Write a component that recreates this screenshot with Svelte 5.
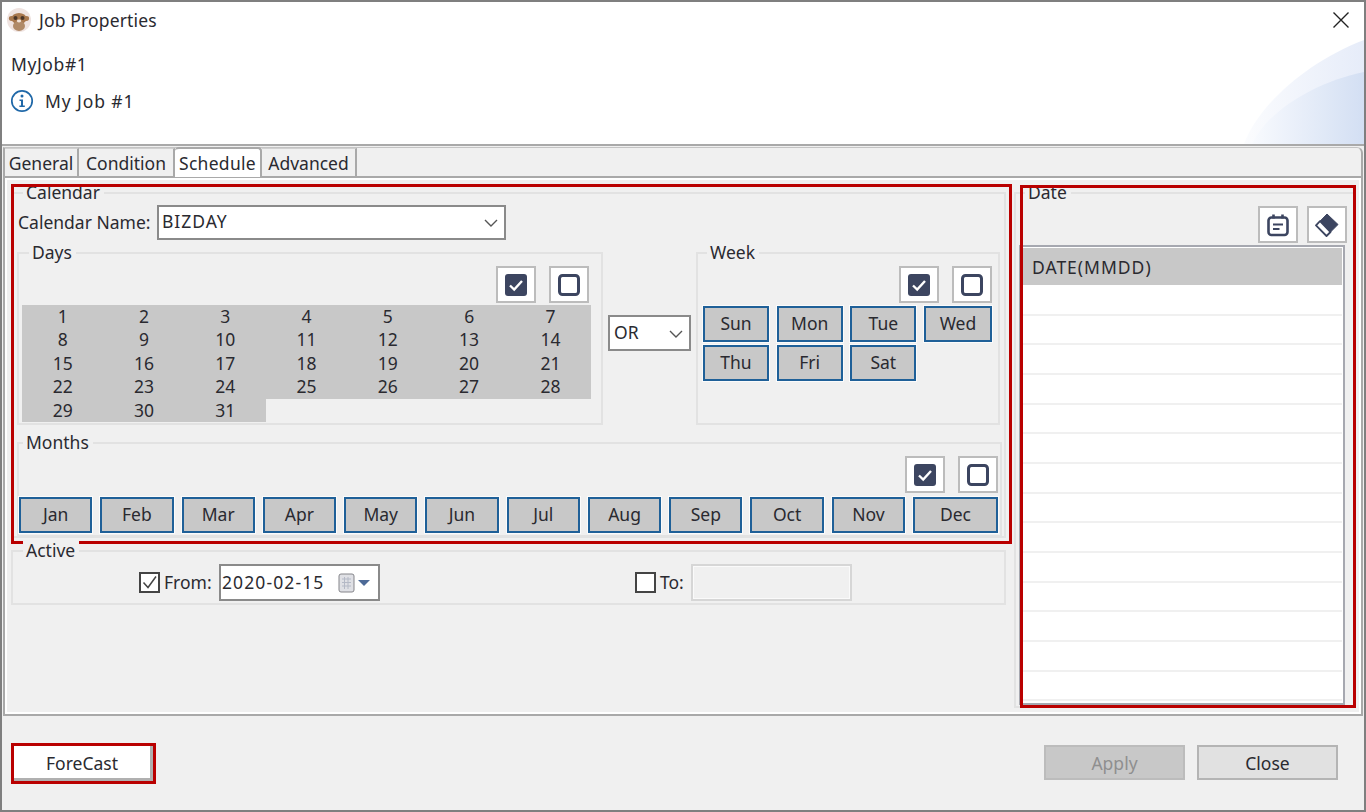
<script>
	const tabs = [
		{ label: 'General', width: 74 },
		{ label: 'Condition', width: 96 },
		{ label: 'Schedule', width: 87 },
		{ label: 'Advanced', width: 95 }
	];
	const days = Array.from({ length: 31 }, (_, i) => i + 1);
	const weekDays = ['Sun', 'Mon', 'Tue', 'Wed', 'Thu', 'Fri', 'Sat'];
	const months = ['Jan', 'Feb', 'Mar', 'Apr', 'May', 'Jun', 'Jul', 'Aug', 'Sep', 'Oct', 'Nov', 'Dec'];
	const emptyRows = Array.from({ length: 14 });
</script>

{#snippet checkPair()}
	<div class="check-pair">
		<button class="icon-btn" aria-label="Select all">
			<svg width="22" height="22" viewBox="0 0 22 22">
				<rect x="0" y="0" width="22" height="22" rx="3" fill="#3c4560" />
				<path d="M5 11.5l4.2 4L17 7" fill="none" stroke="#fff" stroke-width="2.4" />
			</svg>
		</button>
		<button class="icon-btn" aria-label="Clear all">
			<svg width="22" height="22" viewBox="0 0 22 22">
				<rect x="1.5" y="1.5" width="19" height="19" rx="3" fill="#fff" stroke="#3c4560" stroke-width="3" />
			</svg>
		</button>
	</div>
{/snippet}

{#snippet chevron()}
	<svg class="chevron" width="14" height="8" viewBox="0 0 14 8">
		<path d="M1 1l6 6 6-6" fill="none" stroke="#555" stroke-width="1.4" />
	</svg>
{/snippet}

<div class="window">
	<header class="header">
		<svg class="swoosh" width="120" height="106" viewBox="0 0 120 106">
			<defs>
				<linearGradient id="sw" x1="0" x2="1" y1="0" y2="0">
					<stop offset="0" stop-color="#fbfcfe" />
					<stop offset="1" stop-color="#e6ecf9" />
				</linearGradient>
				<linearGradient id="sw2" x1="0" x2="1" y1="0" y2="0">
					<stop offset="0" stop-color="#f8fafe" />
					<stop offset="1" stop-color="#d3dff3" />
				</linearGradient>
			</defs>
			<path d="M0 106C14 68 62 24 120 2V106Z" fill="url(#sw)" />
			<path d="M8 106C24 72 72 44 120 34V106Z" fill="url(#sw2)" />
		</svg>
		<div class="title-row">
			<svg class="logo" width="24" height="24" viewBox="0 0 24 24">
				<circle cx="12" cy="12" r="12" fill="#efe3e0" />
				<ellipse cx="4.5" cy="10.5" rx="2.6" ry="2.4" fill="#a9794f" />
				<ellipse cx="19.5" cy="10.5" rx="2.6" ry="2.4" fill="#a9794f" />
				<ellipse cx="12" cy="10.5" rx="7.5" ry="5.5" fill="#a9794f" />
				<ellipse cx="12" cy="18" rx="6" ry="5" fill="#b08a68" />
				<circle cx="8.5" cy="10" r="2" fill="#4a3527" />
				<circle cx="15.5" cy="10" r="2" fill="#4a3527" />
				<ellipse cx="12" cy="13" rx="2.2" ry="1.4" fill="#f0e2d8" />
			</svg>
			<span class="title">Job Properties</span>
			<svg class="close" width="16" height="16" viewBox="0 0 16 16">
				<path d="M0.5 0.5l15 15M15.5 0.5l-15 15" stroke="#222" stroke-width="1.4" />
			</svg>
		</div>
		<div class="job-name">MyJob#1</div>
		<div class="job-desc">
			<svg width="24" height="24" viewBox="0 0 24 24">
				<circle cx="12" cy="12" r="10.2" fill="#fff" stroke="#1f68a8" stroke-width="1.7" />
				<circle cx="12" cy="7" r="1.5" fill="#1f68a8" />
				<path d="M9.5 10.5H13V16.6H14.8V18H9.4V16.6H11V11.9H9.5Z" fill="#1f68a8" />
			</svg>
			<span>My Job #1</span>
		</div>
	</header>

	<section class="folder">
		<nav class="tabs">
			{#each tabs as tab}
				<div class="tab" class:active={tab.label === 'Schedule'} style="width: {tab.width}px">{tab.label}</div>
			{/each}
		</nav>

		<div class="content">
			<div class="left">
				<div class="group calendar">
					<span class="legend">Calendar</span>
					<div class="name-row">
						<span class="name-label">Calendar Name:</span>
						<div class="combo name-combo"><span class="wide">BIZDAY</span> {@render chevron()}</div>
					</div>

					<div class="days-row">
						<div class="group days">
							<span class="legend">Days</span>
							{@render checkPair()}
							<div class="day-grid">
								{#each days as d}
									<div class="day">{d}</div>
								{/each}
							</div>
						</div>
						<div class="combo or-combo">OR {@render chevron()}</div>
						<div class="group week">
							<span class="legend week-legend">Week</span>
							{@render checkPair()}
							<div class="week-grid">
								{#each weekDays as w}
									<button class="toggle">{w}</button>
								{/each}
							</div>
						</div>
					</div>

					<div class="group months">
						<span class="legend months-legend">Months</span>
						{@render checkPair()}
						<div class="month-grid">
							{#each months as m}
								<button class="toggle">{m}</button>
							{/each}
						</div>
					</div>
					<div class="mark mark-calendar"></div>
				</div>

				<div class="group active-group">
					<span class="legend">Active</span>
					<span class="box checked">
						<svg width="17" height="17" viewBox="0 0 17 17">
							<path d="M2.5 8.5l4.5 5 8-11" fill="none" stroke="#444" stroke-width="1.5" />
						</svg>
					</span>
					<span class="from-label">From:</span>
					<div class="combo date-combo">
						<span class="wide date-text">2020-02-15</span>
						<svg width="34" height="24" viewBox="0 0 34 24">
							<rect x="2" y="3" width="15" height="18" rx="2" fill="#dfe0e5" stroke="#85858a" />
							<path d="M5 8h9M5 11.5h9M5 15h9M7.5 6v12M11 6v12" stroke="#b4b9c6" stroke-width="1" />
							<path d="M21 9h12l-6 6z" fill="#4d6a97" />
						</svg>
					</div>
					<span class="box to-box"></span>
					<span class="to-label">To:</span>
					<div class="to-input"></div>
				</div>
			</div>

			<div class="group date-group">
				<span class="legend date-legend">Date</span>
				<div class="date-tools">
					<button class="icon-btn" aria-label="Calendar">
						<svg width="24" height="24" viewBox="0 0 24 24">
							<rect x="2.5" y="4.5" width="19" height="17.5" rx="3" fill="#fff" stroke="#3c4560" stroke-width="2.6" />
							<path d="M7.5 1.5v4M16.5 1.5v4" stroke="#3c4560" stroke-width="2.6" />
							<path d="M7 11.5h10M7 16h6.5" stroke="#3c4560" stroke-width="2" />
						</svg>
					</button>
					<button class="icon-btn" aria-label="Erase">
						<svg width="24" height="24" viewBox="0 0 24 24">
							<path d="M12 1L23 11.5 15.5 19 5 8.2Z" fill="#3c4560" stroke="#3c4560" stroke-linejoin="round" />
							<path d="M5 8.2L15.5 19 11.5 23 1 12.4Z" fill="#fff" stroke="#3c4560" stroke-width="1.8" stroke-linejoin="round" />
						</svg>
					</button>
				</div>
				<div class="date-list">
					<div class="date-row selected"><span class="wide">DATE(MMDD)</span></div>
					{#each emptyRows as _}
						<div class="date-row"></div>
					{/each}
				</div>
				<div class="mark mark-date"></div>
			</div>
		</div>
	</section>

	<footer class="footer">
		<div class="forecast-wrap">
			<button class="forecast">ForeCast</button>
			<div class="mark mark-forecast"></div>
		</div>
		<div class="actions">
			<button class="action disabled">Apply</button>
			<button class="action">Close</button>
		</div>
	</footer>
</div>

<style>
	:global(body) {
		margin: 0;
		background: #f0f0f0;
	}
	* {
		box-sizing: border-box;
	}
	.window {
		width: 1366px;
		height: 812px;
		border: 2px solid #7f7f7f;
		background: #f0f0f0;
		display: flex;
		flex-direction: column;
		font-family: "Noto Sans", "Open Sans", sans-serif;
		font-size: 17.5px;
		line-height: 24px;
		color: #2a2a30;
		overflow: hidden;
	}
	button {
		font: inherit;
		color: inherit;
		padding: 0;
	}
	.wide {
		letter-spacing: 1px;
	}

	/* header */
	.header {
		position: relative;
		height: 144px;
		flex: none;
		background: #fff;
		border-bottom: 2px solid #a9a9a9;
		overflow: hidden;
	}
	.swoosh {
		position: absolute;
		right: 0;
		bottom: 0;
	}
	.title-row {
		display: flex;
		align-items: center;
		height: 24px;
		margin: 6px 0 0 5px;
		gap: 8px;
	}
	.title {
		letter-spacing: 0.15px;
		margin-top: -1px;
	}
	.close {
		position: absolute;
		right: 15px;
		top: 10px;
	}
	.job-name {
		margin: 20px 0 0 9px;
		letter-spacing: 0.6px;
	}
	.job-desc {
		display: flex;
		align-items: center;
		gap: 11px;
		margin: 13px 0 0 8px;
		letter-spacing: 0.9px;
	}

	/* tabs */
	.folder {
		flex: none;
		height: 569px;
		margin: 1px 1px 0 1px;
		border: 2px solid #a9a9a9;
		border-top: 1px solid #c4c4c4;
		border-top-right-radius: 6px;
		display: flex;
		flex-direction: column;
	}
	.tabs {
		flex: none;
		height: 30px;
		display: flex;
		border-bottom: 2px solid #a9a9a9;
	}
	.tab {
		height: 28px;
		padding-top: 2px;
		text-align: center;
		border-right: 2px solid #a9a9a9;
		border-top: 1px solid #d0d0d0;
		white-space: nowrap;
	}
	.tab.active {
		height: 30px;
		margin-top: -1px;
		background: #fff;
		border-top: 2px solid #a9a9a9;
		border-top-left-radius: 4px;
		border-top-right-radius: 4px;
		letter-spacing: 0.3px;
	}
	.content {
		flex: 1;
		display: flex;
		gap: 8px;
		border: 2px solid #fff;
		padding: 12px 3px 4px 4px;
		min-height: 0;
	}
	.left {
		width: 995px;
		flex: none;
	}

	/* group boxes */
	.group {
		position: relative;
		border: 2px solid #e2e2e2;
	}
	.legend {
		position: absolute;
		top: -14px;
		left: 10px;
		padding: 0 4px 0 3px;
		background: #f0f0f0;
		line-height: 24px;
	}
	.week-legend {
		left: 9px;
	}
	.months-legend {
		left: 4px;
	}
	.date-legend {
		left: 9px;
	}
	.mark {
		position: absolute;
		border: 3px solid #b90000;
		pointer-events: none;
	}
	.mark-calendar {
		inset: -10px -8px -8px -2px;
	}
	.mark-date {
		inset: -9px -2px -2px 4px;
	}
	.mark-forecast {
		inset: -3px;
	}

	/* calendar */
	.calendar {
		height: 346px;
		padding: 11px 0 0 4px;
	}
	.name-row {
		display: flex;
		align-items: center;
		padding-left: 1px;
	}
	.name-label {
		width: 139px;
		flex: none;
		white-space: nowrap;
		margin-top: -1px;
	}
	.combo {
		display: flex;
		align-items: center;
		justify-content: space-between;
		background: #fff;
		border: 2px solid #8a8a8a;
	}
	.name-combo {
		width: 349px;
		height: 35px;
		padding: 0 6px 4px 3px;
	}
	.chevron {
		flex: none;
		margin-top: 4px;
	}
	.days-row {
		display: flex;
		align-items: flex-start;
		margin-top: 12px;
	}
	.days {
		width: 586px;
		height: 173px;
		padding: 12px 12px 0 3px;
	}
	.check-pair {
		display: flex;
		justify-content: flex-end;
		gap: 13px;
	}
	.icon-btn {
		width: 40px;
		height: 37px;
		display: flex;
		align-items: center;
		justify-content: center;
		background: #fff;
		border: 2px solid #bcbcbc;
	}
	.day-grid {
		display: grid;
		grid-template-columns: repeat(7, 81.3px);
		grid-auto-rows: 23.4px;
		margin-top: 2px;
		width: 569px;
	}
	.day {
		background: #c8c8c8;
		text-align: center;
		line-height: 23px;
	}
	.or-combo {
		flex: none;
		width: 83px;
		height: 36px;
		margin: 63px 5px 0 5px;
		padding: 0 6px 3px 4px;
	}
	.week {
		width: 304px;
		height: 173px;
		padding: 12px 6px 0 5px;
	}
	.week-grid {
		display: grid;
		grid-template-columns: 66px 66px 66px 68px;
		grid-auto-rows: 36px;
		column-gap: 7.67px;
		row-gap: 3px;
		margin-top: 3px;
	}
	.toggle {
		background: #c8c8c8;
		border: 2px solid #1f6098;
		outline: 1px solid #fbfbfb;
		line-height: 30px;
		padding-bottom: 2px;
	}
	.months {
		width: 985px;
		height: 95px;
		margin-top: 17px;
		padding: 12px 2px 0 0;
	}
	.month-grid {
		display: grid;
		grid-template-columns: repeat(11, 1fr) 85px;
		grid-auto-rows: 36px;
		gap: 8px;
		margin-top: 4px;
	}

	/* active */
	.active-group {
		height: 55px;
		margin-top: 12px;
		display: flex;
		align-items: center;
		padding: 10px 0 0 126px;
	}
	.box {
		flex: none;
		width: 21px;
		height: 21px;
		display: flex;
		align-items: center;
		justify-content: center;
		background: #fff;
		border: 2px solid #444;
	}
	.from-label {
		width: 48px;
		margin: -2px 0 0 4px;
		flex: none;
	}
	.date-combo {
		width: 161px;
		height: 37px;
		margin-left: 7px;
		padding: 0 7px 0 1px;
		flex: none;
	}
	.date-text {
		letter-spacing: 1.1px;
		margin-top: -2px;
	}
	.to-box {
		margin-left: 255px;
	}
	.to-label {
		width: 26px;
		flex: none;
		margin: -2px 0 0 4px;
	}
	.to-input {
		width: 161px;
		height: 37px;
		flex: none;
		margin-left: 5px;
		border: 2px solid #d6d6d6;
		outline: 1px solid #fafafa;
		outline-offset: -3px;
	}

	/* date list */
	.date-group {
		width: 342px;
		flex: none;
		height: 516px;
		padding: 12px 7px 0 3px;
	}
	.date-tools {
		display: flex;
		justify-content: flex-end;
		gap: 9px;
	}
	.date-list {
		height: 460px;
		margin: 2px 2px 0 0;
		padding: 1px 1px 0 2px;
		background: #fff;
		border: 2px solid #a6a8b0;
		overflow: hidden;
	}
	.date-row {
		height: 29.67px;
		border-bottom: 2px solid #f0f0f0;
	}
	.date-row.selected {
		height: 37px;
		margin-bottom: 1px;
		padding: 7px 0 0 9px;
		background: #c8c8c8;
		border-bottom: none;
	}

	/* footer */
	.footer {
		flex: 1;
		display: flex;
		justify-content: space-between;
		align-items: flex-start;
		padding: 29px 26px 0 12px;
	}
	.forecast-wrap {
		position: relative;
		margin-top: 1px;
	}
	.forecast {
		display: block;
		width: 139px;
		height: 35px;
		padding-top: 1px;
		background: #fff;
		border: none;
		border-right: 3px solid #b0b0b0;
		border-bottom: 3px solid #b0b0b0;
	}
	.actions {
		display: flex;
		gap: 12px;
	}
	.action {
		width: 141px;
		height: 35px;
		background: #e1e1e1;
		border: 2px solid #b4b4b4;
	}
	.action.disabled {
		background: #c8c8c8;
		color: #8f8f8f;
		border-color: #bcbcbc;
	}
</style>
